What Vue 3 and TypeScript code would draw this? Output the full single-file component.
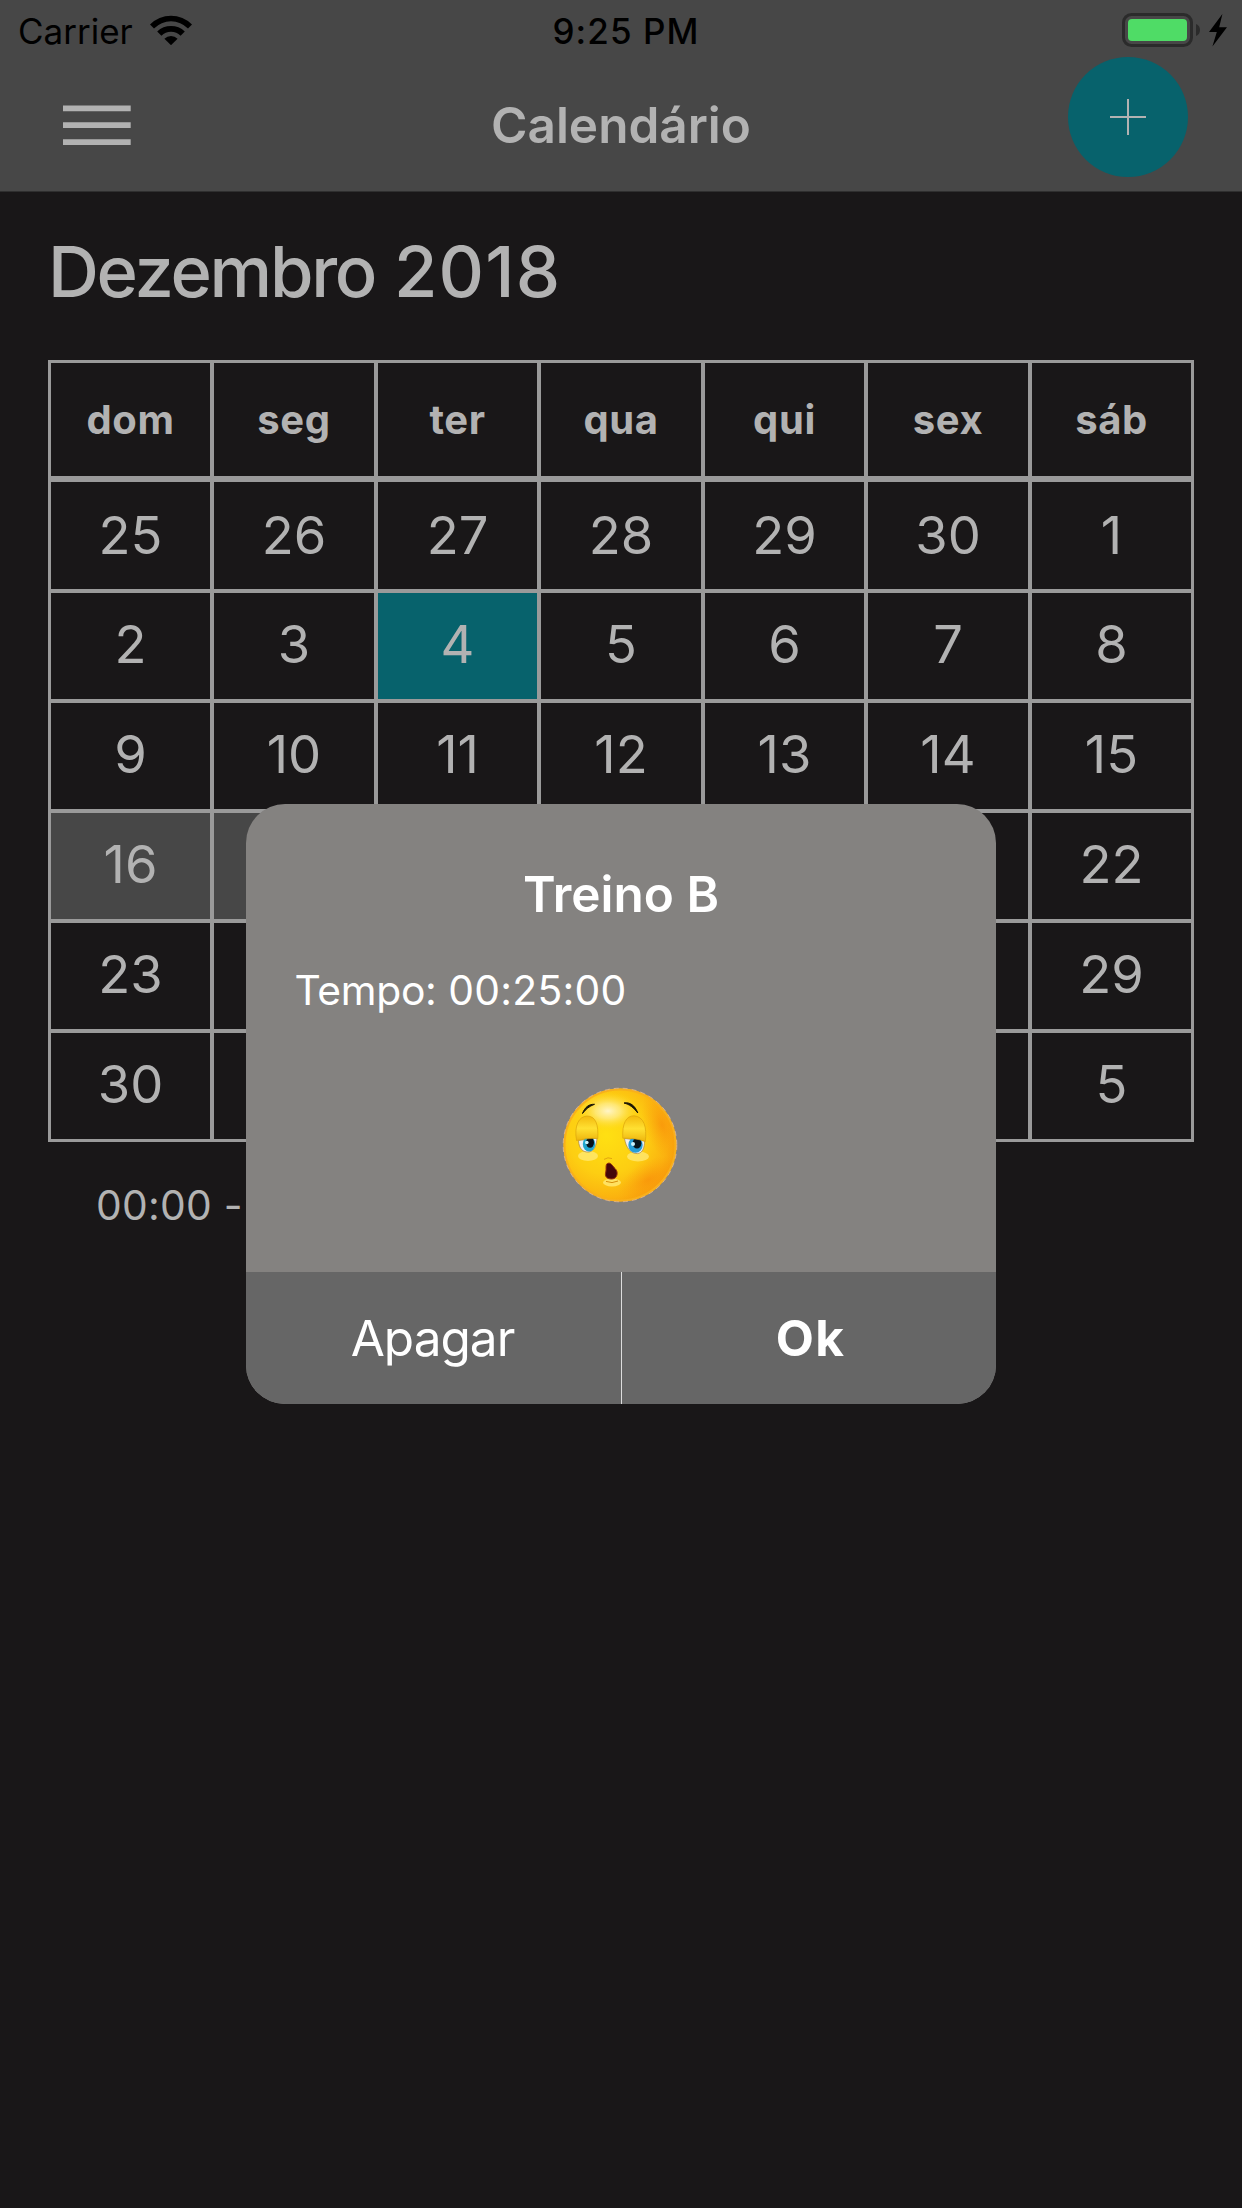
<script setup lang="ts">
interface Day {
  n: number
  state?: 'today' | 'marked'
  covered: boolean
}

const weekdays: string[] = ['dom', 'seg', 'ter', 'qua', 'qui', 'sex', 'sáb']

// 25 Nov 2018 opens the first row of the six-week December grid
const start = new Date(2018, 10, 25)
const days: Day[] = Array.from({ length: 42 }, (_, i) => {
  const d = new Date(start.getFullYear(), start.getMonth(), start.getDate() + i)
  const col = i % 7
  // labels that lie behind the open popup are left out
  const day: Day = { n: d.getDate(), covered: i >= 21 && col > 0 && col < 6 }
  if (d.getMonth() === 11) {
    if (day.n === 4) day.state = 'today'
    else if (day.n === 16 || day.n === 17) day.state = 'marked'
  }
  return day
})
</script>

<template>
  <div class="screen">
    <header class="header">
      <div class="status">
        <div class="carrier">
          <span>Carrier</span>
          <svg class="wifi" width="42" height="30" viewBox="0 0 42 30">
            <path d="M0 9.4A29.7 29.7 0 0 1 42 9.4L38 13.4A24 24 0 0 0 4 13.4Z" />
            <path d="M7.2 16.6A19.5 19.5 0 0 1 34.8 16.6L30.6 20.8A13.6 13.6 0 0 0 11.4 20.8Z" />
            <path d="M14.4 23.8A9.3 9.3 0 0 1 27.6 23.8L21 30.2Z" />
          </svg>
        </div>
        <div class="clock">9:25 PM</div>
        <svg class="battery" width="106" height="34" viewBox="0 0 106 34">
          <rect x="1.5" y="1.5" width="68" height="31" rx="8" fill="none" stroke="#2b2b2b" stroke-width="3" />
          <rect x="6" y="6" width="59" height="22" rx="4" fill="#4fdc66" />
          <path d="M74 11a6.5 6.5 0 0 1 0 12z" fill="#2b2b2b" />
          <path d="M100.4 1L87 19H94.8L90.4 33.6L105 14.2H97.2Z" fill="#000" />
        </svg>
      </div>
      <div class="nav">
        <button class="menu" aria-label="Menu">
          <svg width="68" height="40" viewBox="0 0 68 40">
            <path d="M0 .4H67.7V6.2H0ZM0 17.3H67.7V23.1H0ZM0 34.2H67.7V40H0Z" fill="#b2b2b2" />
          </svg>
        </button>
        <h1>Calendário</h1>
        <button class="add" aria-label="Adicionar">
          <svg width="36" height="36" viewBox="0 0 36 36">
            <path d="M18 0V36M0 18H36" stroke="#b2b2b2" stroke-width="2" />
          </svg>
        </button>
      </div>
    </header>

    <main class="content">
      <h2><span class="month">Dezembro</span> <span class="year">2018</span></h2>
      <div class="calendar">
        <div class="row-head">
          <div v-for="w in weekdays" :key="w" class="cell">{{ w }}</div>
        </div>
        <div class="grid">
          <div v-for="(d, i) in days" :key="i" class="cell" :class="d.state">
            <template v-if="!d.covered">{{ d.n }}</template>
          </div>
        </div>
      </div>
      <p class="event">00:00 -</p>
    </main>

    <section class="popup" role="dialog">
      <div class="popup-body">
        <h3>Treino B</h3>
        <p><span class="label">Tempo:</span> 00:25:00</p>
        <svg class="face" width="116" height="116" viewBox="0 0 116 116">
          <defs>
            <radialGradient id="skin" cx="0.38" cy="0.42" r="0.68">
              <stop offset="0" stop-color="#ffe012" />
              <stop offset="0.5" stop-color="#fdce12" />
              <stop offset="0.8" stop-color="#fbb30f" />
              <stop offset="1" stop-color="#f6960a" />
            </radialGradient>
            <radialGradient id="shine">
              <stop offset="0" stop-color="#fff5c8" />
              <stop offset="0.4" stop-color="#ffec8a" stop-opacity="0.8" />
              <stop offset="1" stop-color="#ffd820" stop-opacity="0" />
            </radialGradient>
            <radialGradient id="warm">
              <stop offset="0" stop-color="#f88708" stop-opacity="0.6" />
              <stop offset="1" stop-color="#fb9a0a" stop-opacity="0" />
            </radialGradient>
            <linearGradient id="lid" x1="0" y1="0" x2="0" y2="1">
              <stop offset="0" stop-color="#f3b90c" />
              <stop offset="0.5" stop-color="#ffe032" />
              <stop offset="1" stop-color="#eeb50d" />
            </linearGradient>
            <clipPath id="disc"><circle cx="58" cy="58" r="56.5" /></clipPath>
          </defs>
          <circle cx="58" cy="58" r="56.5" fill="url(#skin)" />
          <g clip-path="url(#disc)">
            <ellipse cx="100" cy="38" rx="18" ry="36" fill="url(#warm)" transform="rotate(-18 100 38)" />
            <ellipse cx="86" cy="93" rx="34" ry="18" fill="url(#warm)" transform="rotate(-32 86 93)" />
            <ellipse cx="46" cy="24" rx="31" ry="19" fill="url(#shine)" />
          </g>
          <circle cx="58" cy="58" r="55.5" fill="none" stroke="#f8b01c" stroke-width="2" />
          <circle cx="58" cy="58" r="56.8" fill="none" stroke="#e5b991" stroke-width="0.8" stroke-dasharray="5 4" />
          <path d="M20.5 26.5C23 20 27 17 32.5 17.3C27 19.4 24 22 20.5 26.5Z" fill="#191405" stroke="#191405" stroke-linejoin="round" />
          <path d="M62 16C68 14.8 73 18.5 75.8 26C71.5 20.4 67.5 17.4 62 16Z" fill="#191405" stroke="#191405" stroke-linejoin="round" />
          <ellipse cx="26" cy="69" rx="10" ry="5" fill="#ffe978" opacity="0.75" />
          <ellipse cx="76" cy="69.5" rx="11" ry="5" fill="#ffe978" opacity="0.75" />
          <path d="M16.5 53.5C17 62 21 65.5 27 65C32.5 64 34.5 58 35 51Z" fill="#eef0f4" stroke="#a78442" stroke-width="0.7" />
          <ellipse cx="27" cy="57" rx="6.2" ry="7.5" fill="#20a6cf" />
          <ellipse cx="28" cy="55.5" rx="4" ry="5.2" fill="#08141c" />
          <circle cx="24.8" cy="55.5" r="1.8" fill="#c9f3ff" />
          <path d="M14.5 53.5C12 38 17 29.5 25 29C34 29 36.5 38 35.8 51.5C29 51 21 52 14.5 53.5Z" fill="url(#lid)" stroke="#dba40c" stroke-width="0.7" />
          <path d="M62.5 51.5C64 61 69 66.8 75.5 66.6C80.5 66 82.5 61 82.6 54Z" fill="#eef0f4" stroke="#a78442" stroke-width="0.7" />
          <ellipse cx="73.5" cy="58" rx="7.2" ry="7.8" fill="#279ed8" />
          <ellipse cx="75" cy="56.3" rx="4.4" ry="5.2" fill="#08141c" />
          <circle cx="71" cy="57" r="2" fill="#c9f3ff" />
          <path d="M60.8 51.2C60 37 64 28.6 72 28.8C82 29.5 85 40 83.4 54.5C77 52 69 51 60.8 51.2Z" fill="url(#lid)" stroke="#dba40c" stroke-width="0.7" />
          <path d="M42 72.4Q46 69.6 50 71.6" fill="none" stroke="#e2a70e" stroke-width="1" />
          <ellipse cx="50" cy="95.5" rx="9" ry="4" fill="#ffe66e" opacity="0.85" />
          <path d="M44.5 77.2C48.5 73.5 51 80 53.5 82C56.5 85 55.5 91.8 50 92C44.5 92.3 42.5 89 43.8 85C44.4 82 43.6 79.5 44.5 77.2Z" fill="#45060a" stroke="#963009" stroke-width="1" />
          <path d="M44 94.4Q50 97 56 94" fill="none" stroke="#d99009" stroke-width="1" />
        </svg>
      </div>
      <div class="actions">
        <button>Apagar</button>
        <button class="primary">Ok</button>
      </div>
    </section>
  </div>
</template>

<style>
body {
  background: #191718;
}
</style>

<style scoped>
.screen {
  position: relative;
  width: 1242px;
  height: 2208px;
  overflow: hidden;
  background: #191718;
  color: #b2b2b2;
  font-family: Inter, "Liberation Sans", sans-serif;
}
h1, h2, h3, p {
  margin: 0;
}
button {
  padding: 0;
  border: 0;
  background: none;
  color: inherit;
  font: inherit;
}
svg {
  display: block;
}
.header {
  box-sizing: border-box;
  height: 192px;
  background: #474747;
  border-bottom: 1px solid #2f2f2f;
}
.status {
  box-sizing: border-box;
  height: 57px;
  padding: 5px 14px 0 18px;
  display: grid;
  grid-template-columns: 1fr auto 1fr;
  align-items: center;
  color: #000;
  font-size: 35px;
  line-height: 52px;
}
.carrier {
  display: flex;
  align-items: center;
  gap: 17px;
}
.wifi {
  margin-top: -2px;
}
.clock {
  padding-left: 6px;
  font-weight: 500;
  letter-spacing: 1.06px;
}
.battery {
  justify-self: end;
  margin-top: -2px;
}
.nav {
  height: 134px;
  padding: 0 54px 0 63px;
  display: grid;
  grid-template-columns: 111px 1fr 120px;
}
.menu {
  width: 68px;
  height: 40px;
  margin-top: 48px;
}
.nav h1 {
  padding-top: 38px;
  font-size: 49.5px;
  font-weight: 600;
  line-height: 60px;
  text-align: center;
}
.add {
  width: 120px;
  height: 120px;
  display: flex;
  align-items: center;
  justify-content: center;
  border-radius: 50%;
  background: #07626c;
}
.content {
  padding: 0 48px;
}
.content h2 {
  padding-top: 30px;
  height: 168px;
  font-size: 70.5px;
  font-weight: 500;
  line-height: 100px;
  white-space: nowrap;
}
.month {
  letter-spacing: -2.3px;
}
.year {
  letter-spacing: 1.2px;
}
.calendar {
  width: 1146px;
  padding: 3px;
  display: flex;
  flex-direction: column;
  gap: 6px;
  background: #9a9a9a;
}
.row-head,
.grid {
  display: grid;
  grid-template-columns: 159px 160px 159px 160px 159px 160px 159px;
  gap: 4px;
}
.row-head {
  height: 113px;
  font-size: 40px;
  font-weight: 700;
  letter-spacing: 0.6px;
}
.grid {
  grid-template-rows: 107px repeat(5, 106px);
  font-size: 52.5px;
}
.cell {
  display: flex;
  align-items: center;
  justify-content: center;
  background: #191718;
}
.grid .cell {
  padding-bottom: 4px;
}
.grid .cell:nth-child(-n + 7) {
  padding-bottom: 1px;
}
.cell.today {
  background: #07626c;
}
.cell.marked {
  background: #474747;
}
.event {
  padding: 33px 0 0 48px;
  font-size: 40.8px;
  line-height: 60px;
  letter-spacing: 0.25px;
}
.content,
.calendar,
.cell,
.content h2 {
  box-sizing: border-box;
}
.popup {
  position: absolute;
  left: 246px;
  top: 804px;
  width: 750px;
  height: 600px;
  display: flex;
  flex-direction: column;
  overflow: hidden;
  border-radius: 39px;
  background: #848280;
  color: #fff;
}
.popup-body {
  height: 468px;
  display: flex;
  flex-direction: column;
}
.popup h3 {
  padding-top: 60px;
  font-size: 49.5px;
  font-weight: 600;
  line-height: 60px;
  text-align: center;
}
.popup p {
  padding: 36px 0 0 48.5px;
  font-size: 40.8px;
  line-height: 60px;
  letter-spacing: 0.25px;
}
.popup .label {
  letter-spacing: -0.3px;
}
.face {
  align-self: center;
  margin-top: 67px;
  margin-right: 2px;
}
.actions {
  flex: 1;
  display: flex;
  background: #666;
}
.actions button {
  flex: 1;
  padding-right: 2px;
  font-size: 49.5px;
  line-height: 132px;
  letter-spacing: -0.98px;
}
.actions .primary {
  box-sizing: border-box;
  flex: 0 0 375px;
  border-left: 1px solid #ddd;
  padding: 0 0 0 3px;
  font-weight: 700;
  letter-spacing: 1.2px;
}
</style>
